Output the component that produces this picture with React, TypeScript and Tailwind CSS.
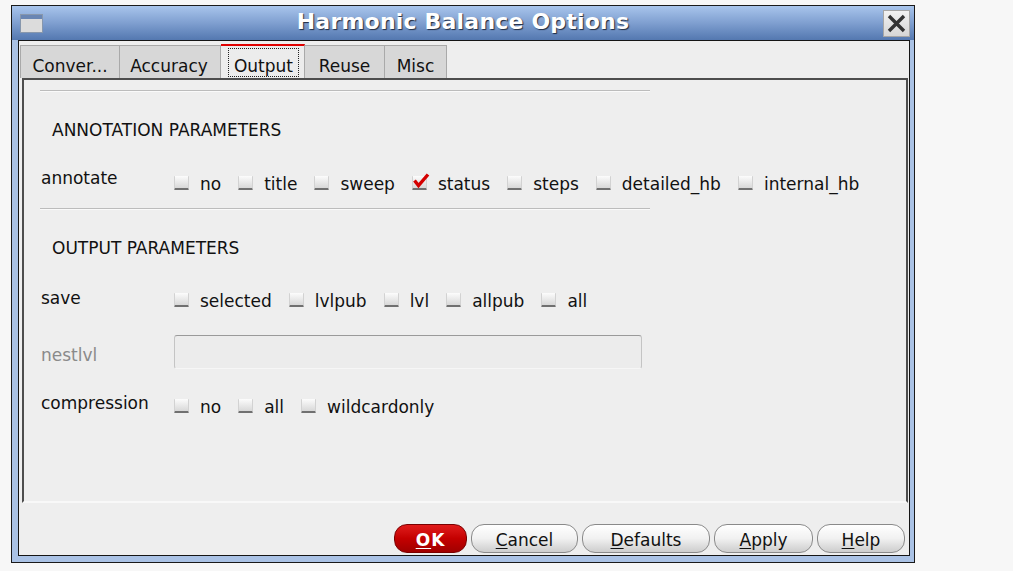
import React from "react";

function Box({ checked }: { checked?: boolean }) {
  return (
    <span className="relative mt-[2px] h-[14px] w-[15px] shrink-0 rounded-[1px] border-x border-x-[#d2d2d2] border-b-2 border-b-[#707070] bg-gradient-to-b from-[#fcfcfc] to-[#d8d8d8]">
      {checked && (
        <svg className="absolute -left-[1px] -top-[3px]" width="18" height="16" viewBox="0 0 18 16">
          <path d="M2.5 7.5 L6.5 12.5 L16 1.5" stroke="#d40000" strokeWidth="3.4" fill="none" strokeLinejoin="miter" />
        </svg>
      )}
    </span>
  );
}

function Opt({ label, checked }: { label: string; checked?: boolean }) {
  return (
    <span className="flex items-start gap-[11px]">
      <Box checked={checked} />
      <span>{label}</span>
    </span>
  );
}

function Sep() {
  return <div className="h-[2px] w-[610px] border-t border-t-[#bcbcbc] border-b border-b-[#fafafa]" />;
}

function Btn({ w, u, rest }: { w: string; u: string; rest: string }) {
  return (
    <div
      className={`${w} flex h-[29px] items-center justify-center rounded-[13px] border border-[#8a8a8a] bg-gradient-to-b from-[#ffffff] via-[#f1f1f1] to-[#cdcdcd] pt-[3px] text-[17px] text-[#111]`}
    >
      <span>
        <span className="underline underline-offset-2">{u}</span>
        {rest}
      </span>
    </div>
  );
}

export default function App() {
  return (
    <div className="min-h-screen w-full bg-[#f7f7f7] pl-[11px] pt-[5px] font-['DejaVu_Sans',sans-serif] leading-[20px] text-[17px] text-[#111]">
      <div className="flex h-[558px] w-[904px] flex-col border border-[#1a1a1a] bg-[#aac2e5]">
        {/* Title bar */}
        <div className="flex h-[34px] items-center bg-gradient-to-b from-[#a9c5ec] via-[#7f9fd0] to-[#5478b0]">
          <div className="ml-[8px] flex h-[19px] w-[23px] flex-col border border-[#8797ad] bg-[#dcdcdc]">
            <div className="h-[4px] bg-[#6a86b3]" />
          </div>
          <div className="flex-1 pb-[3px] text-center text-[22px] font-bold leading-[26px] tracking-[0.2px] text-white [text-shadow:1px_1px_1px_#1e2a40]">
            Harmonic Balance Options
          </div>
          <div className="mr-[4px] flex h-[27px] w-[27px] items-center justify-center border border-[#a6a6a6] bg-gradient-to-b from-[#f2f2f2] to-[#d6d6d6]">
            <svg width="21" height="21" viewBox="0 0 21 21">
              <path d="M3 3 L18 18 M18 3 L3 18" stroke="#333" strokeWidth="3.4" fill="none" />
            </svg>
          </div>
        </div>

        {/* Body */}
        <div className="mb-[6px] ml-[6px] mr-[4px] flex flex-1 flex-col border border-[#151515] bg-[#eeeeee]">
          {/* Tabs */}
          <div className="flex h-[37px] items-end pl-[1px] pt-[3px]">
            <div className="flex h-[33px] w-[100px] items-end justify-center border border-b-0 border-[#a9a9a9] bg-[#d7d7d7] pb-[2px]">
              Conver...
            </div>
            <div className="flex h-[33px] w-[101px] items-end justify-center border border-b-0 border-l-0 border-[#a9a9a9] bg-[#d7d7d7] pb-[2px] pr-[2px]">
              Accuracy
            </div>
            <div className="flex h-[34px] w-[84px] items-end justify-center border-t-2 border-t-[#e00000] border-r border-r-[#a9a9a9] bg-[#ececec] pb-[1px] pl-[2px]">
              <span className="flex h-[29px] items-end border border-dotted border-[#222] px-[5px]">Output</span>
            </div>
            <div className="flex h-[33px] w-[80px] items-end justify-center border border-b-0 border-l-0 border-[#a9a9a9] bg-[#d7d7d7] pb-[2px]">
              Reuse
            </div>
            <div className="flex h-[33px] w-[62px] items-end justify-center border border-b-0 border-l-0 border-[#a9a9a9] bg-[#d7d7d7] pb-[2px]">
              Misc
            </div>
          </div>

          {/* Panel */}
          <div className="ml-[3px] mr-[1px] flex h-[425px] flex-col border-2 border-[#4d4d4d] border-b-[#f8f8f8] pl-[16px]">
            <div className="mt-[10px]">
              <Sep />
            </div>
            <div className="ml-[12px] mt-[28px]">ANNOTATION PARAMETERS</div>
            <div className="mt-[28px] flex h-[26px] items-start pl-[1px]">
              <span className="w-[133px]">annotate</span>
              <div className="flex gap-[17px] pt-[6px]">
                <Opt label="no" />
                <Opt label="title" />
                <Opt label="sweep" />
                <Opt label="status" checked />
                <Opt label="steps" />
                <Opt label="detailed_hb" />
                <Opt label="internal_hb" />
              </div>
            </div>
            <div className="mt-[14px]">
              <Sep />
            </div>
            <div className="ml-[12px] mt-[28px]">OUTPUT PARAMETERS</div>
            <div className="mt-[30px] flex h-[23px] items-start pl-[1px]">
              <span className="w-[133px]">save</span>
              <div className="flex gap-[17px] pt-[3px]">
                <Opt label="selected" />
                <Opt label="lvlpub" />
                <Opt label="lvl" />
                <Opt label="allpub" />
                <Opt label="all" />
              </div>
            </div>
            <div className="mt-[24px] flex h-[34px] items-start pl-[1px]">
              <span className="w-[133px] pt-[10px] text-[#8a8a8a]">nestlvl</span>
              <div className="h-[34px] w-[468px] rounded-[3px] border border-[#c4c4c4] border-t-[#9a9a9a] border-b-[#f6f6f6] bg-[#ececec]" />
            </div>
            <div className="mt-[24px] flex items-start pl-[1px]">
              <span className="w-[133px]">compression</span>
              <div className="flex gap-[17px] pt-[4px]">
                <Opt label="no" />
                <Opt label="all" />
                <Opt label="wildcardonly" />
              </div>
            </div>
          </div>

          {/* Buttons */}
          <div className="mt-[21px] flex justify-end gap-[4px] pr-[4px]">
            <div className="flex h-[29px] w-[73px] items-center justify-center rounded-[13px] border border-[#7a0000] bg-gradient-to-b from-[#e01a1a] via-[#c40000] to-[#a00000] pt-[3px] font-bold tracking-[1px] text-white">
              <span>
                <span className="underline underline-offset-2">O</span>K
              </span>
            </div>
            <Btn w="w-[107px]" u="C" rest="ancel" />
            <Btn w="w-[128px]" u="D" rest="efaults" />
            <Btn w="w-[99px]" u="A" rest="pply" />
            <Btn w="w-[88px]" u="H" rest="elp" />
          </div>
        </div>
      </div>
    </div>
  );
}
